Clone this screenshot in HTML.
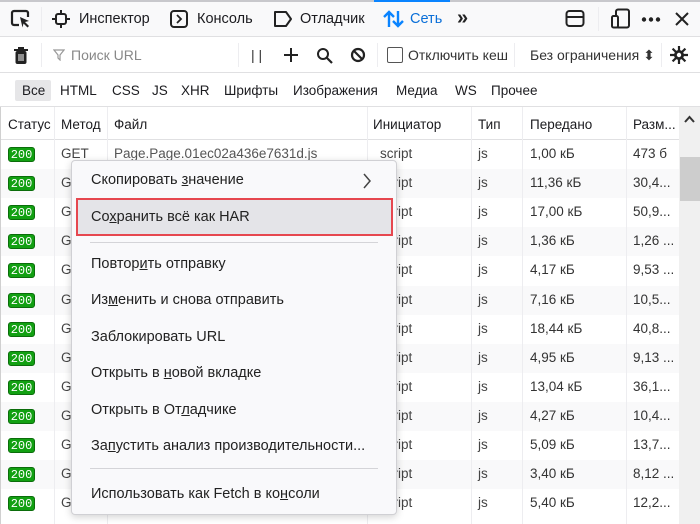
<!DOCTYPE html>
<html><head><meta charset="utf-8"><style>
*{box-sizing:border-box;margin:0;padding:0}
body{width:700px;height:524px;overflow:hidden;background:#fff;font-family:"Liberation Sans","DejaVu Sans",sans-serif;font-size:13.5px;color:#1b1b1f;position:relative}
.a{position:absolute;white-space:nowrap}
.tb{left:0;top:0;width:700px;height:37px;background:#f9f9fa;border-top:2px solid #c8c8cc;border-bottom:1px solid #e0e0e2}
.r2{left:0;top:37px;width:700px;height:36px;background:#fff;border-bottom:1px solid #e0e0e2}
.r3{left:0;top:73px;width:700px;height:34px;background:#fff;border-bottom:1px solid #e0e0e2}
.hd{left:0;top:107px;width:679px;height:33px;background:#fff;border-bottom:1px solid #e0e0e2}
.row{left:0;width:679px;height:29px}
.b{left:8px;width:27px;height:15px;background:#12a012;border-radius:3px;color:#fff;font-family:"Liberation Mono",monospace;font-size:12px;line-height:15px;text-align:center;border:1px solid #0b6d0b}
.vl{width:1px;background:#ededf0}
.menu{left:71px;top:160px;width:326px;height:355px;background:#f9f9fb;border:1px solid #d0d0d4;border-radius:4px;box-shadow:0 2px 8px rgba(0,0,0,.18)}
.mi{left:19px;font-size:14.5px;color:#222}
.sep{left:18px;width:288px;height:1px;background:#d4d4d8}
u{text-decoration:underline}
</style></head><body>
<div class="a tb"></div>
<div class="a r2"></div>
<div class="a r3"></div>
<div class="a hd"></div>
<svg class="a" style="left:10px;top:8px" width="22" height="22" viewBox="0 0 22 22"><path d="M9 17H4a2 2 0 0 1-2-2V5a2 2 0 0 1 2-2h12a2 2 0 0 1 2 2v4" fill="none" stroke="#222" stroke-width="2.2"/><path d="M10 9l9 4-4 1 4 4-1.5 1.5-4-4-1 4z" fill="#222"/></svg>
<div class="a vl" style="left:41px;top:7px;height:24px"></div>
<svg class="a" style="left:52px;top:10px" width="18" height="18" viewBox="0 0 18 18"><rect x="4" y="4" width="10" height="10" rx="2" fill="none" stroke="#222" stroke-width="2"/><path d="M9 0v4M9 14v4M0 9h4M14 9h4" stroke="#222" stroke-width="2"/></svg>
<div class="a" style="left:79px;top:11px;font-size:14.5px">Инспектор</div>
<svg class="a" style="left:170px;top:10px" width="18" height="18" viewBox="0 0 18 18"><rect x="1" y="1" width="16" height="16" rx="3" fill="none" stroke="#222" stroke-width="2"/><path d="M7 5l4 4-4 4" fill="none" stroke="#222" stroke-width="1.8"/></svg>
<div class="a" style="left:197px;top:11px;font-size:14.5px">Консоль</div>
<svg class="a" style="left:273px;top:10px" width="20" height="18" viewBox="0 0 20 18"><path d="M2 2h11l5 7-5 7H2z" fill="none" stroke="#222" stroke-width="2" stroke-linejoin="round"/></svg>
<div class="a" style="left:300px;top:11px;font-size:14.5px">Отладчик</div>
<div class="a" style="left:374px;top:0;width:76px;height:2px;background:#0a84ff"></div>
<svg class="a" style="left:383px;top:9px" width="22" height="20" viewBox="0 0 22 20"><path d="M6 18V3M1 8l5-5 5 5M15 2v15M10 12l5 5 5-5" fill="none" stroke="#0a84ff" stroke-width="2.4"/></svg>
<div class="a" style="left:410px;top:11px;font-size:14.5px;color:#0a6fd8">Сеть</div>
<div class="a" style="left:457px;top:7px;font-size:20px;font-weight:bold;color:#222">»</div>
<svg class="a" style="left:565px;top:9px" width="20" height="20" viewBox="0 0 20 20"><rect x="1.5" y="2" width="17" height="15" rx="3" fill="none" stroke="#222" stroke-width="2"/><path d="M2 8h16" stroke="#222" stroke-width="2"/></svg>
<div class="a vl" style="left:598px;top:7px;height:24px"></div>
<svg class="a" style="left:611px;top:8px" width="20" height="22" viewBox="0 0 20 22"><rect x="5" y="1.5" width="13" height="18" rx="2" fill="none" stroke="#222" stroke-width="2"/><rect x="1" y="8" width="6" height="11.5" rx="1.5" fill="#f9f9fa" stroke="#222" stroke-width="2"/></svg>
<svg class="a" style="left:641px;top:17px" width="20" height="5" viewBox="0 0 20 5"><circle cx="3" cy="2.5" r="2.2" fill="#222"/><circle cx="10" cy="2.5" r="2.2" fill="#222"/><circle cx="17" cy="2.5" r="2.2" fill="#222"/></svg>
<svg class="a" style="left:675px;top:12px" width="14" height="14" viewBox="0 0 14 14"><path d="M1 1l12 12M13 1L1 13" stroke="#222" stroke-width="2"/></svg>
<svg class="a" style="left:13px;top:46px" width="16" height="19" viewBox="0 0 16 19"><path d="M5 2h6M1 4h14" stroke="#222" stroke-width="2"/><rect x="2.5" y="5" width="11" height="13" rx="2" fill="#222"/><path d="M6 8v7M8 8v7M10 8v7" stroke="#fff" stroke-width="1"/></svg>
<div class="a vl" style="left:41px;top:43px;height:24px"></div>
<svg class="a" style="left:53px;top:49px" width="12" height="12" viewBox="0 0 12 12"><path d="M1 1h10L7 6v5L5 9V6z" fill="none" stroke="#999" stroke-width="1.2"/></svg>
<div class="a" style="left:71px;top:47px;color:#888;font-size:14px">Поиск URL</div>
<div class="a vl" style="left:238px;top:43px;height:24px"></div>
<div class="a" style="left:251px;top:47px;color:#333;font-size:14px">| |</div>
<svg class="a" style="left:283px;top:47px" width="16" height="16" viewBox="0 0 16 16"><path d="M8 1v14M1 8h14" stroke="#222" stroke-width="2"/></svg>
<svg class="a" style="left:316px;top:47px" width="17" height="17" viewBox="0 0 17 17"><circle cx="7" cy="7" r="5" fill="none" stroke="#222" stroke-width="2"/><path d="M11 11l5 5" stroke="#222" stroke-width="2.2"/></svg>
<svg class="a" style="left:350px;top:47px" width="16" height="16" viewBox="0 0 16 16"><circle cx="8" cy="8" r="6" fill="none" stroke="#222" stroke-width="2.2"/><path d="M4 4l8 8" stroke="#222" stroke-width="2.2"/></svg>
<div class="a vl" style="left:377px;top:43px;height:24px"></div>
<div class="a" style="left:387px;top:47px;width:16px;height:16px;border:1.5px solid #555;border-radius:2px;background:#fff"></div>
<div class="a" style="left:408px;top:47px;font-size:14px;color:#333">Отключить кеш</div>
<div class="a vl" style="left:514px;top:43px;height:24px"></div>
<div class="a" style="left:530px;top:47px;font-size:14px;color:#333">Без ограничения ⬍</div>
<div class="a vl" style="left:661px;top:43px;height:24px"></div>
<svg class="a" style="left:669px;top:45px" width="20" height="20" viewBox="0 0 20 20"><g stroke="#222" stroke-width="2.2"><path d="M10 1v18M1 10h18M3.6 3.6l12.8 12.8M16.4 3.6L3.6 16.4"/></g><circle cx="10" cy="10" r="5" fill="#222"/><circle cx="10" cy="10" r="2.2" fill="#fff"/></svg>
<div class="a" style="left:15px;top:80px;width:36px;height:21px;background:#e6e6e8;border-radius:2px"></div>
<div class="a" style="left:22px;top:83px">Все</div>
<div class="a" style="left:60px;top:83px">HTML</div>
<div class="a" style="left:112px;top:83px">CSS</div>
<div class="a" style="left:152px;top:83px">JS</div>
<div class="a" style="left:181px;top:83px">XHR</div>
<div class="a" style="left:224px;top:83px">Шрифты</div>
<div class="a" style="left:293px;top:83px">Изображения</div>
<div class="a" style="left:396px;top:83px">Медиа</div>
<div class="a" style="left:455px;top:83px">WS</div>
<div class="a" style="left:491px;top:83px">Прочее</div>
<div class="a" style="left:8px;top:117px">Статус</div>
<div class="a" style="left:61px;top:117px">Метод</div>
<div class="a" style="left:114px;top:117px">Файл</div>
<div class="a" style="left:373px;top:117px">Инициатор</div>
<div class="a" style="left:478px;top:117px">Тип</div>
<div class="a" style="left:530px;top:117px">Передано</div>
<div class="a" style="left:633px;top:117px">Разм...</div>
<div class="a" style="left:679px;top:107px;width:21px;height:417px;background:#f0f0f0"></div>
<svg class="a" style="left:684px;top:115px" width="11" height="8" viewBox="0 0 11 8"><path d="M1 7l4.5-5L10 7" fill="none" stroke="#333" stroke-width="2"/></svg>
<div class="a" style="left:680px;top:157px;width:20px;height:44px;background:#cdcdcd"></div>
<div id="rows"></div>
<div class="a vl" style="left:54px;top:107px;height:417px"></div>
<div class="a vl" style="left:107px;top:107px;height:417px"></div>
<div class="a vl" style="left:367px;top:107px;height:417px"></div>
<div class="a vl" style="left:471px;top:107px;height:417px"></div>
<div class="a vl" style="left:522px;top:107px;height:417px"></div>
<div class="a vl" style="left:626px;top:107px;height:417px"></div>
<div class="a" style="left:0;top:107px;width:1px;height:417px;background:#d0d0d0"></div>
<script>
var t=["1,00 кБ","11,36 кБ","17,00 кБ","1,36 кБ","4,17 кБ","7,16 кБ","18,44 кБ","4,95 кБ","13,04 кБ","4,27 кБ","5,09 кБ","3,40 кБ","5,40 кБ"];
var s=["473 б","30,4...","50,9...","1,26 ...","9,53 ...","10,5...","40,8...","9,13 ...","36,1...","10,4...","13,7...","8,12 ...","12,2..."];
var h="";
for(var i=0;i<13;i++){var y=140+i*29.1;
h+='<div class="a row" style="top:'+y+'px;background:'+(i%2?'#f9f9fa':'#fff')+'"></div>';
h+='<div class="a b" style="top:'+(y+7)+'px">200</div>';
h+='<div class="a" style="left:61px;top:'+(y+6)+'px;color:#444">GET</div>';
h+='<div class="a" style="left:380px;top:'+(y+6)+'px;color:#444">script</div>';
h+='<div class="a" style="left:478px;top:'+(y+6)+'px;color:#444">js</div>';
h+='<div class="a" style="left:530px;top:'+(y+6)+'px;color:#333">'+t[i]+'</div>';
h+='<div class="a" style="left:633px;top:'+(y+6)+'px;color:#333">'+s[i]+'</div>';}
h+='<div class="a" style="left:114px;top:146px;color:#555">Page.Page.01ec02a436e7631d.js</div>';
document.getElementById("rows").innerHTML=h;
</script>
<div class="a menu">
<div class="a mi" style="top:11px">Скопировать <u>з</u>начение</div>
<svg class="a" style="left:290px;top:12px" width="10" height="16" viewBox="0 0 10 16"><path d="M2 1l6 7-6 7" fill="none" stroke="#444" stroke-width="1.5"/></svg>
<div class="a" style="left:4px;top:37px;width:317px;height:38px;background:#e4e4e8;border:2px solid #e6474f"></div>
<div class="a mi" style="top:48px">Со<u>х</u>ранить всё как HAR</div>
<div class="a sep" style="top:81px"></div>
<div class="a mi" style="top:95px">Повтор<u>и</u>ть отправку</div>
<div class="a mi" style="top:131px">Из<u>м</u>енить и снова отправить</div>
<div class="a mi" style="top:168px">Заблокировать URL</div>
<div class="a mi" style="top:204px">Открыть в <u>н</u>овой вкладке</div>
<div class="a mi" style="top:241px">Открыть в От<u>л</u>адчике</div>
<div class="a mi" style="top:277px">За<u>п</u>устить анализ производительности...</div>
<div class="a sep" style="top:307px"></div>
<div class="a mi" style="top:325px">Использовать как Fetch в ко<u>н</u>соли</div>
</div>
</body></html>
